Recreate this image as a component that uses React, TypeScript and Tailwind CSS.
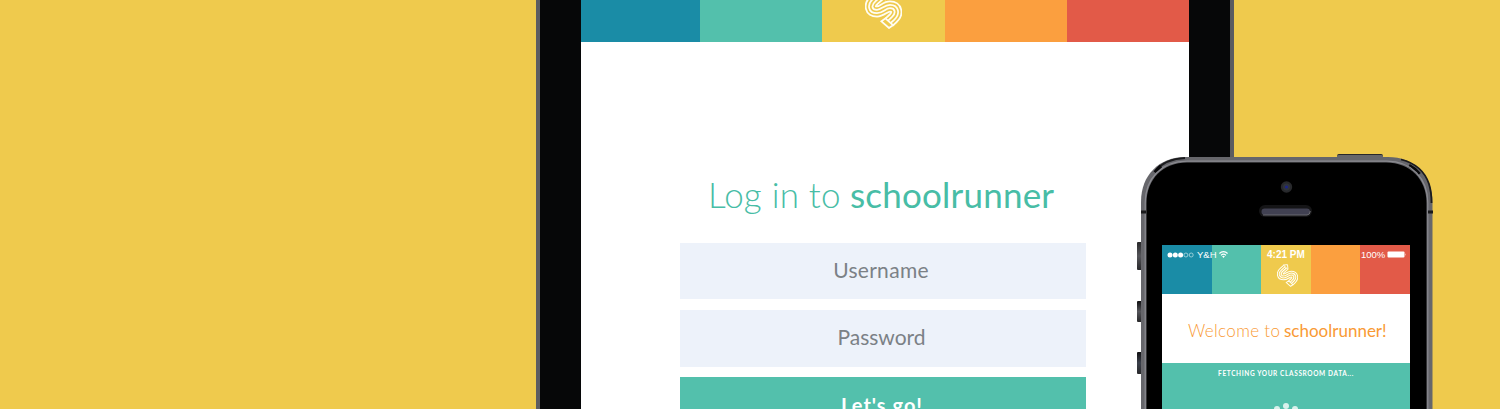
import React from "react";

const stripes = ["bg-[#1a8ca6]", "bg-[#53c0ac]", "bg-[#efca4d]", "bg-[#fb9f3f]", "bg-[#e25a48]"];

function Logo({ className }: { className: string }) {
  const body = "M15.5 5.5 L9.5 10.8 C3.500 16 5 22.500 12 22.500 C17 22.500 20 17.500 25 17.500 C32 17.500 33.500 24.500 28 29.500 L24 33.2";
  return (
    <svg className={className} viewBox="0 0 37 40" fill="none">
      <path d={body} stroke="#fffdf3" strokeWidth="12" />
      <path d={body} stroke="#efca4d" strokeWidth="8.400" />
      <path d={body} stroke="#fffdf3" strokeWidth="5.200" />
      <path d={body} stroke="#efca4d" strokeWidth="1.700" />
      <path d="M11.4 1.6 L18.5 0.9 L19.4 9.4 Z" fill="#efca4d" stroke="#fffdf3" strokeWidth="1.7" />
      <path d="M20.4 29.4 L28 36.2 L24 39 L16.4 32.4 Z" fill="#efca4d" stroke="#fffdf3" strokeWidth="1.8" />
    </svg>
  );
}

function Tablet() {
  return (
    <div className="flex h-full w-[698px] shrink-0 border-x-4 border-[#5c5c60] bg-[#060708] px-[41px]">
      <div className="flex w-full flex-col bg-white">
        <div className="flex h-[42px] shrink-0">
          <div className="w-[119px] bg-[#1a8ca6]" />
          <div className="w-[122px] bg-[#53c0ac]" />
          <div className="flex w-[123px] justify-center bg-[#efca4d]">
            <Logo className="-mt-[11px] h-[40px] w-[37px] shrink-0" />
          </div>
          <div className="w-[122px] bg-[#fb9f3f]" />
          <div className="w-[122px] bg-[#e25a48]" />
        </div>
        <h1 className="mt-[130px] ml-[127px] flex h-[44px] items-center text-[35px] leading-[44px] whitespace-pre text-[#48bda6]">
          <span className="w-[142px] font-light tracking-[0.2px]">Log in to</span>
          <span className="font-normal tracking-[0.2px]">schoolrunner</span>
        </h1>
        <form className="mt-[27px] ml-[99px] flex w-[406px] shrink-0 flex-col text-center text-[#7b8186]">
          <div className="h-[56px] bg-[#edf2fa] pr-[4px] text-[21px] leading-[54px] tracking-[0.3px]">Username</div>
          <div className="mt-[11px] h-[57px] bg-[#edf2fa] pr-[3px] text-[21px] leading-[54px]">Password</div>
          <div className="mt-[10px] h-[57px] bg-[#53c0ac] pr-[2px] text-[20px] leading-[56px] font-bold tracking-[1px] text-white">
            Let's go!
          </div>
        </form>
      </div>
    </div>
  );
}

function StatusBar() {
  return (
    <div className="flex h-[19px] items-center font-['Liberation_Sans',sans-serif] text-[10px] leading-[19px] text-white">
      <svg className="ml-[5px] h-[6px] w-[27px]" viewBox="0 0 27 6" fill="none">
        <circle cx="3" cy="3" r="2.5" fill="#fff" />
        <circle cx="8.3" cy="3" r="2.5" fill="#fff" />
        <circle cx="13.6" cy="3" r="2.5" fill="#fff" />
        <circle cx="18.9" cy="3" r="2" stroke="#c6e5ea" strokeWidth=".7" />
        <circle cx="24.2" cy="3" r="2" stroke="#c6e5ea" strokeWidth=".7" />
      </svg>
      <span className="ml-[3px] w-[20px] text-[9.5px] whitespace-nowrap">Y&amp;H</span>
      <svg className="ml-[2px] h-[7px] w-[9px]" viewBox="0 0 9 7" fill="none" stroke="#fff" strokeWidth="1.2">
        <path d="M.4 2.5C2.7.1 6.3.1 8.600 2.5M2 4.3C3.4 2.9 5.6 2.9 7 4.3" />
        <path d="M3.1 5.3L4.5 6.9L5.9 5.3Q4.5 4.4 3.1 5.3Z" fill="#fff" stroke="none" />
      </svg>
      <span className="ml-[39px] w-[40px] font-bold whitespace-nowrap">4:21 PM</span>
      <span className="ml-[54px] w-[26px] text-[9.500px] whitespace-nowrap">100%</span>
      <svg className="h-[7px] w-[19px]" viewBox="0 0 19 7">
        <rect x=".5" y=".5" width="17" height="6" rx="1" fill="#fff" />
        <path d="M18 2.3Q19 3.5 18 4.7Z" fill="#fff" />
      </svg>
    </div>
  );
}

function Phone() {
  return (
    <div className="absolute top-[154px] left-[1137px] h-[255px] w-[298px]">
      <div className="absolute top-0 left-[200px] h-[8px] w-[46px] rounded-t-[2px] border-t border-[#28282b] bg-[#66666a]" />
      <div className="absolute top-[88px] left-0 h-[28px] w-[6px] rounded-l-[1px] bg-gradient-to-b from-[#29292b] via-[#55555a] to-[#29292b]" />
      <div className="absolute top-[147px] left-0 h-[21px] w-[6px] rounded-l-[1px] bg-gradient-to-b from-[#111113] via-[#55555a] to-[#29292b]" />
      <div className="absolute top-[198px] left-0 h-[22px] w-[6px] rounded-l-[1px] bg-gradient-to-b from-[#111113] via-[#3b404b] to-[#29292b]" />
      <svg className="absolute top-[3px] left-[4px] h-[252px] w-[292px]" viewBox="0 0 292 252" fill="none">
        <path d="M0 252V45C0 18 18 0 45 0H247C273 0 291.500 18 291.500 45V252Z" fill="#66666b" />
        <path d="M14 14C21 6 32 1.500 44 1M260 2.500C274 6 284 15 288 27Q290.500 35 290.500 46" stroke="#1b1b1d" strokeWidth="1.800" />
        <path d="M20 9Q16.500 12 14 15.500M268 8.500Q274 11.500 278.500 17" stroke="#09090b" strokeWidth="3.500" />
        <path d="M4.200 252V46C4.200 21 21 4.200 46 4.200H246C270 4.200 286.800 21 286.800 46V252" stroke="#8b8b91" strokeWidth="1.200" />
        <path d="M5.500 252V46C5.500 22 22 5.500 46 5.500H245C269 5.500 285.500 22 285.500 46V252Z" fill="#000" />
        <path d="M0 55H5M287 55H292" stroke="#19191b" strokeWidth="3" />
        <circle cx="145.500" cy="30" r="5.700" fill="#28292c" />
        <circle cx="145.500" cy="30" r="3.500" fill="#30343c" />
        <circle cx="145.500" cy="30" r="1.600" fill="#1c2586" />
        <rect x="118" y="48" width="53" height="12" rx="6" fill="#151517" />
        <rect x="120.500" y="51.500" width="48.500" height="6.500" rx="3.200" fill="#414152" />
        <path d="M122 58H166Q169 58 169.300 54" stroke="#6b6b70" strokeWidth="1" />
      </svg>
      <div className="absolute top-[91px] left-[25px] flex h-[164px] w-[248px] flex-col bg-white">
        <div className="relative h-[49px] shrink-0">
          <div className="flex h-full">
            {stripes.map((color) => (
              <div key={color} className={"flex-1 " + color} />
            ))}
          </div>
          <div className="absolute inset-0 flex flex-col">
            <StatusBar />
            <Logo className="ml-[115px] h-[23px] w-[21px]" />
          </div>
        </div>
        <div className="flex h-[69px] shrink-0 items-center pt-[5px] pl-[26px] text-[17px] whitespace-pre text-[#f99a35]">
          <span className="w-[96px] font-light tracking-[0.35px]">Welcome to</span>
          <span>schoolrunner!</span>
        </div>
        <div className="flex grow flex-col items-center bg-[#53c0ac]">
          <div className="mt-[6px] text-[6.500px] leading-[10px] font-bold tracking-[0.63px] whitespace-nowrap text-white">
            FETCHING YOUR CLASSROOM DATA...
          </div>
          <svg className="mt-[24px] h-[6px] w-[30px]" viewBox="0 0 30 6" fill="#d8f1ec">
            <circle cx="15" cy="3" r="3" />
            <circle cx="6" cy="6" r="3" />
            <circle cx="24" cy="6" r="3" />
          </svg>
        </div>
      </div>
    </div>
  );
}

export default function App() {
  return (
    <main className="relative flex h-[409px] w-[1500px] overflow-hidden bg-[#efca4d] pl-[536px] font-['Lato',sans-serif]">
      <Tablet />
      <Phone />
    </main>
  );
}
